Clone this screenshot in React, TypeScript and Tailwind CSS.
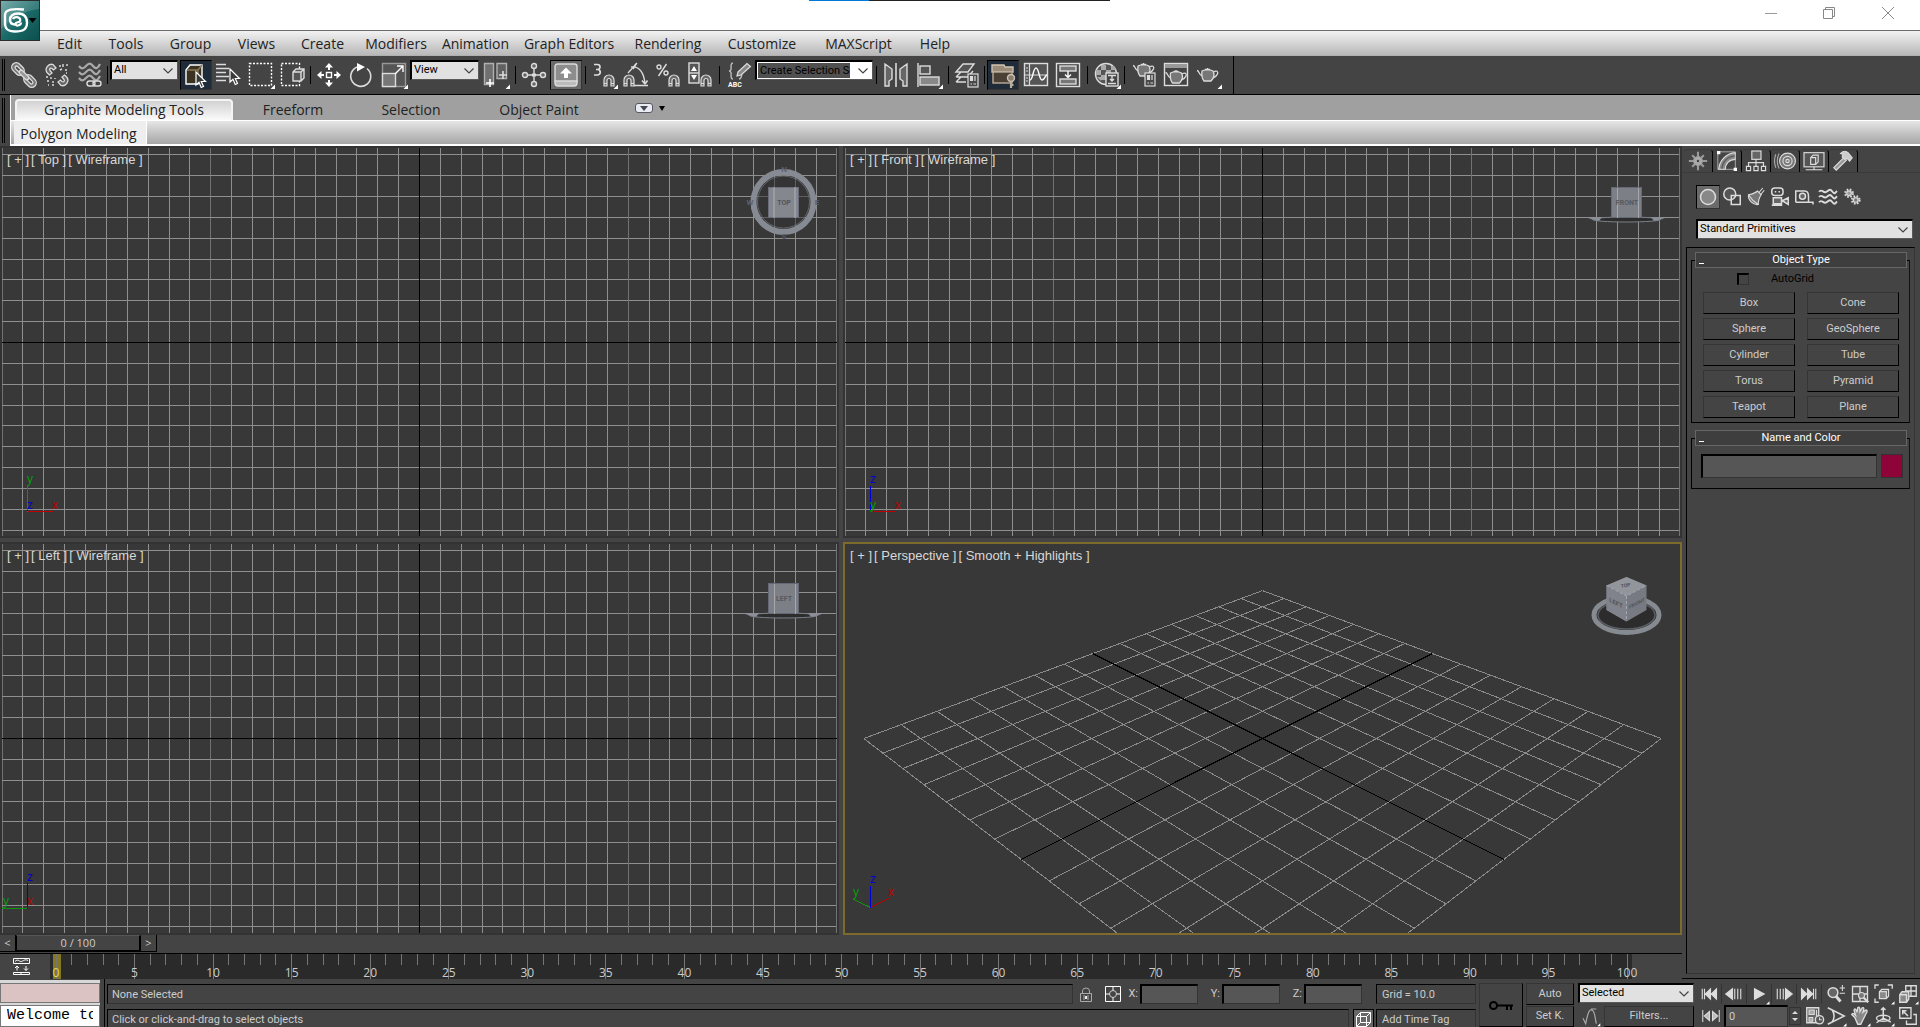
import React from 'react';
import clsx from 'clsx';

const LIGHT = '#dcdcdc';

interface IconProps {
  children: React.ReactNode;
  flyout?: boolean;
  className?: string;
}

// 24px drawing used by every toolbar button
const Icon: React.FC<IconProps> = ({ children, flyout, className = 'w-6 h-6' }) => (
  <svg viewBox="0 0 24 24" fill="none" stroke={LIGHT} strokeWidth="1.4" className={clsx('overflow-visible shrink-0', className)} aria-hidden="true">
    {children}
    {flyout && <path d="M21.5 26L26 21.5V26z" fill="#fff" stroke="none" />}
  </svg>
);

const Magnet = ({ x, y }: { x: number; y: number }) => (
  <path
    transform={`translate(${x} ${y})`}
    d="M0 11V5a5 5 0 0 1 10 0v6H7V5.500a2 2 0 0 0-4 0V11z M0 8.500h3 M7 8.500h3"
    fill="#6a6a6a"
    strokeWidth="1.2"
  />
);

const Teapot = ({ x = 0, y = 0 }: { x?: number; y?: number }) => (
  <g transform={`translate(${x} ${y})`} strokeWidth="1.3">
    <path d="M5 5c3-1.500 8-1.500 11 0 1.500 3 1 7-2 10H7C4.500 12 4.500 9 5 5z" fill="#777" />
    <path d="M5 10C2 9 2.500 5 0 4.500M16.500 6c3-2 5-.5 4 2-.7 2-2.500 3-4.500 4M8 3.500h5M10.500 3.500V2" />
  </g>
);

const Cursor = ({ x, y }: { x: number; y: number }) => (
  <path transform={`translate(${x} ${y})`} d="M0 0v13l3-2.800 2.200 5.300 2.300-1-2.200-5H9.500z" fill="#3a3a3a" stroke="#fff" strokeWidth="1.2" />
);

const Card = ({ x, y }: { x: number; y: number }) => (
  <g transform={`translate(${x} ${y})`} strokeWidth="1.2">
    <rect width="10" height="13" fill="#4a4a4a" />
    <path d="M2.500 2.500h2v4h-2z" fill={LIGHT} />
    <path d="M7 2v5M2.500 10h1.500M5.500 10H8" />
  </g>
);

const icons = {
  link: (
    <Icon>
      <g transform="rotate(45 12 12)" strokeWidth="1.3">
        <rect x="-3.500" y="7.500" width="14" height="9" rx="4.500" fill="#777" />
        <rect x="0" y="10.500" width="7" height="3" rx="1.500" fill="#444" />
        <rect x="13.500" y="7.500" width="14" height="9" rx="4.500" fill="#777" />
        <rect x="17" y="10.500" width="7" height="3" rx="1.500" fill="#444" />
        <rect x="6" y="10" width="12" height="4" rx="2" fill="#999" />
      </g>
    </Icon>
  ),
  unlink: (
    <Icon>
      <path d="M4.500 12L2 9.500C-.5 6 3 0 8 1.500L11 5 8.500 7 7 5.500C5 4.500 4 6 5 7.500L7 10zM19.500 12l2.500 2.500c2.500 3.500-1 9.500-6 8L13 19l2.500-2 1.500 1.500c2 1 3-.5 2-2L17 14z" fill="#666" strokeWidth="1.3" />
      <path d="M14 3h2M18 1v3M22 1v2M15 7l2-1M20 7h2M1 14h2M6 14v2M2 18h2M8 18v2M3 22h1M7 22h2M10 15v1M21 10h1" />
    </Icon>
  ),
  bind: (
    <Icon>
      {[3, 9, 15].map((y) => (
        <path key={y} d={`M1 ${y}c3 4 5 2 7 0s4-4 7 0 5 2 7-2`} stroke="#aaa" strokeWidth="2.200" />
      ))}
      <rect x="9" y="18" width="8" height="5" rx="2.500" />
      <rect x="15" y="18" width="8" height="5" rx="2.500" />
    </Icon>
  ),
  selectObject: (
    <Icon>
      <path d="M2 7l4-5h12v14l-4 5H2z" fill="#3b3222" stroke="#fff" />
      <path d="M3 7h11v13M14 7l4-5" stroke="#8a7a5a" />
      <Cursor x={12} y={9} />
    </Icon>
  ),
  selectByName: (
    <Icon>
      <path d="M0 1.500h10M0 5.500h13M0 9.500h10M0 13.500h13M0 17.500h10" strokeWidth="1.600" />
      <Cursor x={14} y={6} />
    </Icon>
  ),
  region: (
    <Icon flyout>
      <rect x=".5" y=".5" width="22" height="22" strokeDasharray="2 1.500" stroke="#fff" />
    </Icon>
  ),
  crossing: (
    <Icon>
      <rect x=".5" y=".5" width="18" height="22" strokeDasharray="2 1.500" stroke="#fff" />
      <path d="M12 9l3-3h8v9l-3 3h-8zM12 9h8v9M20 9l3-3" fill="#555" />
    </Icon>
  ),
  move: (
    <Icon>
      <rect x="9.500" y="9.500" width="5" height="5" stroke="#fff" />
      <path d="M12 0l4 4.500H8zM12 24l4-4.500H8zM0 12l4.500-4v8zM24 12l-4.500-4v8z" fill="#fff" stroke="none" />
      <path d="M12 4v3M12 17v3M4 12h3M17 12h3" stroke="#fff" strokeWidth="2" />
    </Icon>
  ),
  rotate: (
    <Icon>
      <path d="M18 5.500a10 10 0 1 1-9-1.800" strokeWidth="1.600" />
      <path d="M8 0l8 4-8 4.500z" fill="#fff" stroke="none" />
    </Icon>
  ),
  scale: (
    <Icon flyout>
      <rect x=".5" y=".5" width="23" height="23" fill="#555" stroke="#999" />
      <rect x=".5" y="10.500" width="13" height="13" fill="#777" />
      <path d="M13 11l8-8M15 3h6v6" stroke="#fff" />
    </Icon>
  ),
  pivot: (
    <Icon flyout>
      <path d="M.5.500h9v21h-9z" fill="#707070" stroke="#b0b0b0" />
      <path d="M13 .500h9.500v15H13z" fill="#606060" stroke="#b0b0b0" />
      <path d="M6 16v8M2 20h8" stroke="#fff" strokeWidth="1.600" />
      <path d="M19 8v8M15 12h8" stroke={LIGHT} strokeWidth="1.600" />
    </Icon>
  ),
  manipulate: (
    <Icon>
      <path d="M12 5v14M5 12h14" />
      {[[12, 3], [12, 21], [3, 12], [21, 12]].map(([cx, cy]) => (
        <circle key={`${cx}-${cy}`} cx={cx} cy={cy} r="2.500" fill="#666" />
      ))}
      <path d="M10 12h4" strokeWidth="3" />
    </Icon>
  ),
  override: (
    <Icon>
      <rect x="1" y="1" width="22" height="19" rx="2.500" fill="#8d8d8d" />
      <path d="M1 18v2q0 3 3 3h16q3 0 3-3v-2z" fill="#bbb" />
      <path d="M12 4.500l6 6h-4V15h-4v-4.500H6z" fill="#fff" stroke="none" />
    </Icon>
  ),
  snap3: (
    <Icon flyout>
      <path d="M2 1.500h3.500a2.500 2.500 0 0 1 0 5H4h1.500a2.700 2.700 0 0 1 0 5.500H2" stroke="#ddd" strokeWidth="1.700" />
      <Magnet x={12} y={12} />
    </Icon>
  ),
  angle: (
    <Icon>
      <Magnet x={0} y={12} />
      <path d="M4 10L13 0" strokeWidth="1.300" />
      <path d="M7 4c8-1 13 5 14 17" />
      <path d="M10 22.500h14M21 21l-3-3.500M21 21l2.500-3.500M9 6l3-5" strokeWidth="1.600" />
    </Icon>
  ),
  percent: (
    <Icon>
      <circle cx="3" cy="4" r="2" />
      <circle cx="10" cy="10" r="2" />
      <path d="M10.500 1L2.500 13" />
      <Magnet x={13} y={12} />
    </Icon>
  ),
  spinner: (
    <Icon>
      <rect x="1" y="0" width="10" height="20" fill="#555" />
      <path d="M1 10h10" />
      <path d="M3 8l3-5 3 5zM3 12l3 5 3-5z" fill="#fff" stroke="none" />
      <Magnet x={13} y={12} />
    </Icon>
  ),
  namedSets: (
    <Icon>
      <path d="M6 0C3 0 4.500 5 4 6.500 3.500 8 2 8 2 8s1.500 0 2 1.500S3 16 6 16M15 8c0 5-1 8-3 8" stroke="#bbb" />
      <path d="M11 9l9-8.500 3.500 3L14 12l-4 1z" fill="#888" strokeWidth="1.200" />
      <text x="1" y="24" fill="#fff" stroke="none" fontSize="7" fontWeight="bold" fontFamily="Roboto, sans-serif">ABC</text>
    </Icon>
  ),
  mirror: (
    <Icon>
      <path d="M1 1l7 5v10l-3 2v5H1zM23 1l-7 5v10l3 2v5h4z" fill="#666" />
      <path d="M12 0v24" stroke="#eee" />
    </Icon>
  ),
  align: (
    <Icon flyout>
      <path d="M1 0v24" />
      <rect x="3" y="3" width="10" height="8" fill="#555" />
      <rect x="3" y="14" width="19" height="8" fill="#888" />
    </Icon>
  ),
  layers: (
    <Icon>
      <path d="M1 9L8 1h11l-6 8zM1 14h12l5-6M1 14l5-5M1 19h10M1 19l5-5" fill="#555" />
      <Card x={13} y={11} />
    </Icon>
  ),
  ribbon: (
    <Icon>
      <path d="M1 2h12l1 2h8v5H1z" fill="#9a8c78" stroke="#cfc3b0" />
      <rect x="2" y="9" width="19" height="11" fill="#4b4034" stroke="#b8ac9a" />
      <circle cx="20" cy="15" r="3.500" fill="#8a8072" stroke="#cfc3b0" />
      <path d="M20 18.500V25M20 22h2.500" stroke="#b8ac9a" strokeWidth="2.200" />
    </Icon>
  ),
  curve: (
    <Icon>
      <rect x=".5" y=".5" width="23" height="22" fill="#555" />
      <path d="M5.500 1v21M1 12h22M2 5h2M2 8h2M2 15h2M2 18h2" strokeWidth="1.200" />
      <path d="M6 17c3 0 3-12 6-12s3 12 6 12 3-5 5-5" stroke="#fff" />
    </Icon>
  ),
  schematic: (
    <Icon>
      <rect x=".5" y=".5" width="23" height="23" fill="#444" />
      <rect x="4" y="3" width="16" height="5" fill="#777" />
      <rect x="4" y="16" width="16" height="5" fill="#777" />
      <path d="M12 8v6M9 11.500l3 3 3-3" stroke="#fff" />
    </Icon>
  ),
  material: (
    <Icon flyout>
      <circle cx="11" cy="11" r="10.500" fill="#555" />
      <path d="M6 2h5v5H6zM11 7h5v5h-5zM1 7h5v5H1zM6 12h5v5H6zM16 3h3l2 4h-5zM11 17h3v4h-3zM2 14h4v4z" fill="#aaa" stroke="none" />
      <rect x="11" y="10" width="12" height="13" fill="#444" />
      <path d="M13 12.500h8M17 13v5M15 16l2 2 2-2M13 20.500h8" />
    </Icon>
  ),
  renderSetup: (
    <Icon>
      <Teapot x={1} y={-2} />
      <Card x={13} y={10} />
    </Icon>
  ),
  renderedFrame: (
    <Icon>
      <rect x=".5" y=".5" width="23" height="22" fill="#444" />
      <rect x="1" y="1" width="22" height="4" fill="#999" stroke="none" />
      <Teapot x={1.500} y={5} />
    </Icon>
  ),
  render: (
    <Icon flyout>
      <Teapot x={1} y={3} />
    </Icon>
  ),
};

const ToolButton: React.FC<{ label: string; children: React.ReactNode; wide?: boolean; active?: 'blue' | 'gray' }> = ({ label, children, wide, active }) => (
  <button
    aria-label={label}
    className={clsx(
      'shrink-0 flex items-center justify-center',
      wide ? 'w-[33px]' : 'w-8',
      active ? 'h-[30px] border border-black border-r-[#333] border-b-[#333]' : 'h-full',
      active === 'blue' && 'bg-[#1f2b38]',
      active === 'gray' && 'bg-[#6a6a6a]',
    )}
  >
    {children}
  </button>
);

const Separator = ({ tight }: { tight?: boolean }) => (
  <div className={clsx('shrink-0 w-px h-[18px] bg-black', tight ? 'ml-px mr-[2px]' : 'ml-[3px] mr-[2px]')} />
);

const Chevron = () => (
  <svg viewBox="0 0 10 6" className="absolute right-1 top-1/2 -mt-[3px] w-[10px] h-[6px] pointer-events-none" fill="none" stroke="#444" strokeWidth="1.2" aria-hidden="true">
    <path d="M.5.500L5 5 9.500.500" />
  </svg>
);

const Dropdown: React.FC<{ label: string; value: string; className: string }> = ({ label, value, className }) => (
  <div className={clsx('relative shrink-0 border-t-2 border-l-2 border-black border-r border-b border-r-[#5a5a5a] border-b-[#5a5a5a]', className)}>
    <select aria-label={label} className="block appearance-none w-full h-full bg-[#e1e1e1] text-black pl-[2px] pr-4 outline-none">
      <option>{value}</option>
    </select>
    <Chevron />
  </div>
);

const menus = [
  { name: 'Edit', width: 'w-[53px]' },
  { name: 'Tools', width: 'w-[60px]' },
  { name: 'Group', width: 'w-[69px]' },
  { name: 'Views', width: 'w-[63px]' },
  { name: 'Create', width: 'w-[69px]' },
  { name: 'Modifiers', width: 'w-[78px]' },
  { name: 'Animation', width: 'w-[81px]' },
  { name: 'Graph Editors', width: 'w-[106px]' },
  { name: 'Rendering', width: 'w-[92px]' },
  { name: 'Customize', width: 'w-[96px]' },
  { name: 'MAXScript', width: 'w-[97px]' },
  { name: 'Help', width: 'w-[56px]' },
];

const TitleBar = () => (
  <header className="relative shrink-0">
    <div className="h-[31px] bg-white border-b border-[#6b6b6b] flex justify-end">
      <div className="absolute top-0 left-[809px] flex h-px">
        <div className="w-[60px] bg-[#0078d7]" />
        <div className="w-[241px] bg-[#222]" />
      </div>
      <button aria-label="Minimize" className="w-[58px] h-[26px] flex items-center justify-center">
        <svg viewBox="0 0 12 12" className="w-3 h-3" stroke="#999" aria-hidden="true"><path d="M0 6.500h12" /></svg>
      </button>
      <button aria-label="Restore" className="w-[58px] h-[26px] flex items-center justify-center">
        <svg viewBox="0 0 12 12" className="w-3 h-3" fill="none" stroke="#888" aria-hidden="true"><path d="M.5 2.500h9v9h-9zM2.500 2.500v-2h9v9h-2" /></svg>
      </button>
      <button aria-label="Close" className="w-[59px] mr-[3px] h-[26px] flex items-center justify-center">
        <svg viewBox="0 0 12 12" className="w-3 h-3" stroke="#888" aria-hidden="true"><path d="M0 0l12 12M12 0L0 12" /></svg>
      </button>
    </div>
    <nav className="h-[25px] pl-[43px] pt-[2px] flex bg-gradient-to-b from-[#f2f2f2] to-[#b8b8b8] border-b border-[#b0b0b0] text-sm text-[#222]">
      {menus.map((m) => (
        <button key={m.name} className={clsx('h-full whitespace-nowrap', m.width)}>{m.name}</button>
      ))}
    </nav>
    <button aria-label="Application menu" className="absolute left-0 top-0 w-10 h-[41px] border border-[#2b2b2b] bg-gradient-to-br from-[#5c9e9b] via-[#1a6b69] to-[#0c4f4e]">
      <svg viewBox="0 0 38 39" className="w-full h-full" fill="none" stroke="#fff" aria-hidden="true">
        <path d="M0 0h38v8C22 10 10 18 0 28z" fill="#fff" opacity=".15" stroke="none" />
        <path d="M23 8.500C13 7.500 4 8 4 14v8c0 7 4 8.500 10 8.500 8 0 12-2 12-9 0-6-3-9-9-9-5 0-8 2.500-8 6 0 3 2 5 5 5" strokeWidth="2.400" />
        <path d="M12 18c1-2.500 6-2.500 7 0s-1 3-3 3.500-2 3.500 1 3c2-.3 3-1.500 3-3" strokeWidth="2.200" />
        <path d="M27.500 17h8l-4 5z" fill="#000" stroke="none" />
      </svg>
    </button>
  </header>
);

const MainToolbar = () => (
  <div className="shrink-0 h-[39px] bg-[#444] border-b border-black text-[11px] font-['Roboto',sans-serif]">
    <div className="h-full w-[1234px] flex items-center border-r border-black">
      <div className="w-[3px] h-8 mx-[2px] border-x border-black" />
      <ToolButton label="Select and Link" wide>{icons.link}</ToolButton>
      <ToolButton label="Unlink Selection" wide>{icons.unlink}</ToolButton>
      <ToolButton label="Bind to Space Warp" wide>{icons.bind}</ToolButton>
      <Separator tight />
      <Dropdown label="Selection Filter" value="All" className="w-[68px] h-5 self-start mt-1 mr-[2px]" />
      <ToolButton label="Select Object" active="blue">{icons.selectObject}</ToolButton>
      <ToolButton label="Select by Name">{icons.selectByName}</ToolButton>
      <ToolButton label="Rectangular Selection Region" wide>{icons.region}</ToolButton>
      <ToolButton label="Window/Crossing">{icons.crossing}</ToolButton>
      <Separator tight />
      <ToolButton label="Select and Move">{icons.move}</ToolButton>
      <ToolButton label="Select and Rotate">{icons.rotate}</ToolButton>
      <ToolButton label="Select and Scale" wide>{icons.scale}</ToolButton>
      <Dropdown label="Reference Coordinate System" value="View" className="w-[69px] h-5 self-start mt-1" />
      <ToolButton label="Use Pivot Point Center" wide>{icons.pivot}</ToolButton>
      <Separator />
      <ToolButton label="Select and Manipulate">{icons.manipulate}</ToolButton>
      <ToolButton label="Keyboard Shortcut Override" active="gray">{icons.override}</ToolButton>
      <Separator />
      <ToolButton label="Snaps Toggle">{icons.snap3}</ToolButton>
      <ToolButton label="Angle Snap">{icons.angle}</ToolButton>
      <ToolButton label="Percent Snap">{icons.percent}</ToolButton>
      <ToolButton label="Spinner Snap">{icons.spinner}</ToolButton>
      <Separator />
      <ToolButton label="Edit Named Selection Sets" wide>{icons.namedSets}</ToolButton>
      <div className="relative shrink-0 w-[118px] h-5 self-start mt-1 bg-white border-t-2 border-l-2 border-black border-r border-b border-r-[#5a5a5a] border-b-[#5a5a5a] p-px">
        <input aria-label="Named Selection Sets" defaultValue="Create Selection Set" className="block w-[92px] h-full bg-[#505050] text-black pl-[2px] outline-none" />
        <Chevron />
      </div>
      <Separator />
      <ToolButton label="Mirror" wide>{icons.mirror}</ToolButton>
      <ToolButton label="Align" wide>{icons.align}</ToolButton>
      <Separator />
      <ToolButton label="Layer Manager">{icons.layers}</ToolButton>
      <Separator tight />
      <ToolButton label="Graphite Modeling Tools" active="blue">{icons.ribbon}</ToolButton>
      <ToolButton label="Curve Editor" wide>{icons.curve}</ToolButton>
      <ToolButton label="Schematic View">{icons.schematic}</ToolButton>
      <Separator />
      <ToolButton label="Material Editor" wide>{icons.material}</ToolButton>
      <Separator tight />
      <ToolButton label="Render Setup" wide>{icons.renderSetup}</ToolButton>
      <ToolButton label="Rendered Frame Window">{icons.renderedFrame}</ToolButton>
      <ToolButton label="Render Production">{icons.render}</ToolButton>
    </div>
  </div>
);

const Ribbon = () => (
  <div className="shrink-0 h-[51px] flex bg-[#444] text-sm text-[#222]">
    <div className="w-[3px] ml-[2px] mr-[5px] my-[3px] border-x border-black" />
    <div className="flex-1 flex flex-col border-l border-white">
      <div className="h-[25px] bg-[#a0a0a0] flex items-end pl-1">
        <button className="w-[218px] h-[21px] rounded-t-sm border-2 border-b-0 border-[#f4f4f4] bg-gradient-to-b from-[#d2d2d2] to-[#fafafa] leading-4 pb-[2px]">Graphite Modeling Tools</button>
        <button className="w-[120px] h-5">Freeform</button>
        <button className="w-[116px] h-5">Selection</button>
        <button className="w-[140px] h-5">Object Paint</button>
        <button aria-label="Minimize ribbon" className="ml-[26px] mb-[7px] w-[18px] h-[10px] rounded-[3px] border border-[#556] bg-[#e8ecf2] flex items-center justify-center">
          <svg viewBox="0 0 8 5" className="w-2 h-[5px]" aria-hidden="true"><path d="M0 0h8L4 5z" fill="#445" /></svg>
        </button>
        <button aria-label="Ribbon options" className="ml-[6px] mb-[9px]">
          <svg viewBox="0 0 6 5" className="w-[6px] h-[5px]" aria-hidden="true"><path d="M0 0h6L3 5z" fill="#000" /></svg>
        </button>
      </div>
      <div className="flex-1 border-t border-b-2 border-white bg-gradient-to-b from-[#e6e6e6] to-[#a6a6a6] flex pl-[3px]">
        <button className="w-[133px] pt-[2px] pr-[3px] bg-[#eee] border-r border-white whitespace-nowrap">Polygon Modeling</button>
      </div>
    </div>
  </div>
);

const STEP = 20.87;
const range = (from: number, to: number) => Array.from({ length: to - from + 1 }, (_, i) => from + i);

const WireGrid = () => (
  <svg className="block w-full h-full" shapeRendering="crispEdges" aria-hidden="true">
    <svg x="50%" y="50%" className="overflow-visible">
      {range(-60, 60).filter((n) => n !== 0).map((n) => (
        <g key={n} stroke={n % 10 === 0 ? '#727272' : '#8f8f8f'}>
          <path d={`M${Math.round(n * STEP)} -1200V1200`} />
          <path d={`M-1200 ${Math.round(n * STEP)}H1200`} />
        </g>
      ))}
      <path d="M0 -1200V1200M-1200 0H1200" stroke="#000" />
    </svg>
  </svg>
);

// ground plane of 14 x 14 cells seen from a corner
const project = (i: number, j: number) => {
  const a = i - j;
  const b = i + j;
  const w = 1 - 0.0249 * b;
  return `${((28.48 * a) / w).toFixed(1)} ${((14.25 * b) / w).toFixed(1)}`;
};

const PerspectiveGrid = () => (
  <svg className="block w-full h-full" shapeRendering="crispEdges" aria-hidden="true">
    <svg x="50%" y="50%" className="overflow-visible">
      {range(-7, 7).map((n) => (
        <path key={n} d={`M${project(n, -7)}L${project(n, 7)}M${project(-7, n)}L${project(7, n)}`} stroke="#8a8a8a" />
      ))}
      <path d={`M${project(0, -7)}L${project(0, 7)}M${project(-7, 0)}L${project(7, 0)}`} stroke="#000" />
    </svg>
  </svg>
);

const cubeFont = { fontFamily: 'Roboto, sans-serif', fontWeight: 700, textAnchor: 'middle' as const };

const TopCube = () => (
  <>
    <circle cx="40.500" cy="40" r="30" fill="none" stroke="#868a92" strokeWidth="6" />
    <circle cx="40.500" cy="40" r="26" fill="#2f2f2f" fillOpacity=".5" stroke="#606468" />
    <rect x="25.500" y="25.500" width="30" height="30" fill="#85878f" stroke="#6b6c7c" />
    <path d="M31 25v31M52 25v31" stroke="#b0b2b8" />
    <g {...cubeFont} fontSize="8" fill="#50535a">
      <text x="41" y="43" fontSize="7">TOP</text>
      <text x="41" y="10" fill="#5c6070">N</text>
      <text x="41" y="77" fill="#5c6070">S</text>
      <text x="7" y="43" fill="#5c6070">W</text>
      <text x="74" y="43" fill="#5c6070">E</text>
    </g>
  </>
);

const SideCube = ({ face }: { face: string }) => (
  <>
    <ellipse cx="40.500" cy="57.500" rx="34" ry="2.500" fill="#2d2d2d" stroke="#7c8189" />
    <path d="M2 56.500l14-1.500-3 4zM79 56.500L65 55l3 4z" fill="#8a8f98" />
    <rect x="25.500" y="25.500" width="30" height="30" fill="#7d7f86" stroke="#666a76" />
    <path d="M31.500 26v30M52.500 26v30" stroke="#a5a7ad" />
    <text x="41" y="43" {...cubeFont} fontSize="7" fill="#555961">{face}</text>
  </>
);

const PerspectiveCube = () => (
  <>
    <ellipse cx="40.500" cy="57" rx="32.500" ry="17.500" fill="#2c2c2c" stroke="#868a91" strokeWidth="5" />
    <ellipse cx="40.500" cy="57" rx="28.500" ry="14" fill="none" stroke="#5b5f64" strokeWidth="1.500" />
    <path d="M40.500 19l20 8.500V52L40.500 63.500 20.500 52V27.500z" fill="#777a82" />
    <path d="M40.500 19l20 8.500-20 10.500-20-10.500z" fill="#92959c" />
    <path d="M20.500 27.500l20 10.500v25.500l-20-11.500z" fill="#80838b" />
    <path d="M20.500 27.500l20 10.500 20-10.500M40.500 38v25" fill="none" stroke="#a4a8b2" strokeDasharray="3 2" />
    <g {...cubeFont} fontSize="6" fill="#50535a">
      <text transform="translate(30 47) skewY(27)">LEFT</text>
      <text transform="translate(51 47) skewY(-27)" fontSize="5">FRONT</text>
      <text transform="translate(40 29) rotate(-12)" fontSize="5">TOP</text>
    </g>
  </>
);

interface AxisLine {
  name: string;
  color: string;
  path: string;
  x: number;
  y: number;
}

interface ViewportProps {
  name: string;
  shading: string;
  axes: AxisLine[];
  cube: React.ReactNode;
  active?: boolean;
}

const RED = '#c00000';
const GREEN = '#0a980a';
const BLUE = '#0000d0';

const Viewport: React.FC<ViewportProps> = ({ name, shading, axes, cube, active }) => (
  <section className={clsx('relative min-w-0 min-h-0 overflow-hidden bg-[#383838] border-2', active ? 'border-[#7e6a2c]' : 'border-[#333]')}>
    {active ? <PerspectiveGrid /> : <WireGrid />}
    <h2 className="absolute left-[5px] top-1 flex gap-[2px] text-[13px] leading-4 text-[#d8d8d8] font-['Liberation_Sans',sans-serif] whitespace-pre">
      <span>[ + ]</span>
      <span>{`[ ${name} ]`}</span>
      <span>{`[ ${shading} ]`}</span>
    </h2>
    <svg viewBox="0 0 80 80" className="absolute right-[14px] top-[14px] w-20 h-20" aria-hidden="true">{cube}</svg>
    <svg viewBox="0 -12 60 72" className="absolute left-0 bottom-0 w-[60px] h-[72px]" fill="none" aria-hidden="true">
      {axes.map((a) => (
        <g key={a.name}>
          <path d={a.path} stroke={a.color} shapeRendering="crispEdges" />
          <text x={a.x} y={a.y} fill={a.color} fontSize="12" fontFamily="Liberation Sans, sans-serif">{a.name}</text>
        </g>
      ))}
    </svg>
  </section>
);

const Viewports = () => (
  <div className="flex-1 min-h-0 grid grid-cols-2 grid-rows-[392fr_393fr] gap-1">
    <Viewport
      name="Top"
      shading="Wireframe"
      cube={<TopCube />}
      axes={[
        { name: 'x', color: RED, path: 'M25.500 35.500H51', x: 50, y: 33 },
        { name: 'y', color: GREEN, path: 'M25.500 36V10', x: 25, y: 7 },
        { name: 'z', color: BLUE, path: 'M25.500 35V34', x: 25, y: 33 },
      ]}
    />
    <Viewport
      name="Front"
      shading="Wireframe"
      cube={<SideCube face="FRONT" />}
      axes={[
        { name: 'x', color: RED, path: 'M25.500 35.500H51', x: 50, y: 33 },
        { name: 'z', color: BLUE, path: 'M25.500 36V10', x: 25, y: 7 },
        { name: 'y', color: GREEN, path: 'M25.500 35V34', x: 25, y: 33 },
      ]}
    />
    <Viewport
      name="Left"
      shading="Wireframe"
      cube={<SideCube face="LEFT" />}
      axes={[
        { name: 'y', color: GREEN, path: 'M0 35.500H25', x: 1, y: 32 },
        { name: 'z', color: BLUE, path: 'M25.500 36V10', x: 25, y: 8 },
        { name: 'x', color: RED, path: 'M25.500 35V34', x: 25, y: 32 },
      ]}
    />
    <Viewport
      name="Perspective"
      shading="Smooth + Highlights"
      cube={<PerspectiveCube />}
      active
      axes={[
        { name: 'x', color: RED, path: 'M25.500 34.500L45 25', x: 43, y: 23 },
        { name: 'y', color: GREEN, path: 'M25.500 34.500L8 26', x: 8, y: 23 },
        { name: 'z', color: BLUE, path: 'M25.500 35V13', x: 25, y: 10 },
      ]}
    />
  </div>
);

const TimeSlider = () => (
  <div className="shrink-0 h-[19px] border-b border-black bg-[#444] flex items-start text-[11px] leading-4 text-[#ccc]">
    <button className="w-4 h-[17px] border-r border-b border-black">&lt;</button>
    <button className="w-[125px] h-[17px] border-r-2 border-b-2 border-l border-t border-black border-t-[#555] leading-[14px]">0 / 100</button>
    <button className="w-4 h-[17px] border-r border-b border-black">&gt;</button>
  </div>
);

const TrackBar = () => (
  <div className="shrink-0 h-[25px] flex bg-[#444]">
    <button aria-label="Open Mini Curve Editor" className="w-[50px] flex items-center pl-[13px]">
      <svg viewBox="0 0 17 17" className="w-[17px] h-[17px]" fill="none" stroke="#fff" aria-hidden="true">
        <path d="M.5.500h16v5H.5zM2 3.500c3-3 4 0 6 0s4-3 7-1M.5 14.500h16v2H.5zM4 12.500V8M2 10l2-2 2 2M13 8v4.500M11 10.500l2 2 2-2M8 15v1" />
      </svg>
    </button>
    <div className="relative flex-1 mr-[50px] pl-[6px] pr-[5px] bg-[#2a2a2a]">
      <svg className="block w-full h-full overflow-visible" aria-hidden="true">
        <rect x="-3" y="0" width="8" height="25" fill="#857820" />
        {range(0, 100).map((n) => (
          <line key={n} x1={`${n}%`} x2={`${n}%`} y1="0" y2={n % 5 ? 11 : 25} stroke="#767676" shapeRendering="crispEdges" />
        ))}
        {range(0, 20).map((n) => (
          <text key={n} x={`${n * 5}%`} y="23" textAnchor="middle" fontSize="12" fill={n ? '#ccc' : '#e6dc50'}>{n * 5}</text>
        ))}
      </svg>
    </div>
  </div>
);

const panelTabs = [
  {
    name: 'Create',
    icon: (
      <Icon className="w-5 h-5">
        <g stroke="#9a9a9a" strokeWidth="2.500">
          <path d="M12 1v22M1 12h22M5 5l14 14M19 5L5 19" />
          <circle cx="12" cy="12" r="5.500" fill="#aaa" strokeWidth="1" />
          <circle cx="12" cy="12" r="1.500" fill="#444" stroke="none" />
        </g>
      </Icon>
    ),
  },
  {
    name: 'Modify',
    icon: (
      <Icon className="w-5 h-5">
        <path d="M2 22C3 11 11 3 22 2v8c-7 0-12 5-12 12z" fill="#888" />
        <path d="M6 22c0-9 7-16 16-16" stroke="#555" />
        <path d="M1 1h21v21H1z" stroke="#bbb" strokeWidth="1" />
        <path d="M0 0h4v4H0zM20 20h4v4h-4z" fill="#fff" stroke="none" />
      </Icon>
    ),
  },
  {
    name: 'Hierarchy',
    icon: (
      <Icon className="w-5 h-5">
        <rect x="7" y="0" width="11" height="10" fill="#666" />
        <path d="M12 10v8M3 18v-4h18v4" />
        <path d="M.500 18.500h5v5h-5zM9.500 18.500h5v5h-5zM18.500 18.500h5v5h-5z" />
      </Icon>
    ),
  },
  {
    name: 'Motion',
    icon: (
      <Icon className="w-5 h-5">
        <circle cx="15" cy="12" r="9.500" fill="#777" />
        <circle cx="15" cy="12" r="5.500" />
        <circle cx="15" cy="12" r="2" />
        <path d="M5 3C2 8 2 16 5 21M1 4c-2 5-2 11 0 16" stroke="#aaa" />
      </Icon>
    ),
  },
  {
    name: 'Display',
    icon: (
      <Icon className="w-5 h-5">
        <rect x="0" y="2" width="24" height="17" fill="#555" />
        <path d="M8 8l3-3h6v8l-3 3H8zM8 8h6v8" />
        <path d="M12 19v3M2 22.500h20" />
      </Icon>
    ),
  },
  {
    name: 'Utilities',
    icon: (
      <Icon className="w-5 h-5">
        <path d="M1 20L13 8l3 3L4 23z" fill="#999" />
        <path d="M9 3c3-4 7-3 9-1l5 6-3 4-3-3-3 1-3-3 1-3z" fill="#ccc" />
      </Icon>
    ),
  },
];

const categories = [
  { name: 'Geometry', icon: <Icon className="w-[18px] h-[18px]"><circle cx="12" cy="12" r="10" fill="#888" strokeWidth="2" /></Icon> },
  {
    name: 'Shapes',
    icon: (
      <Icon className="w-[18px] h-[18px]">
        <circle cx="9" cy="8" r="8" fill="#555" strokeWidth="2" />
        <path d="M11 10h12v12H11z" strokeWidth="2" />
      </Icon>
    ),
  },
  {
    name: 'Lights',
    icon: (
      <Icon className="w-[18px] h-[18px]">
        <path d="M2 9c5-1 9-2 12-5l5 5c-3 4-4 8-4 13C8 23 1 16 2 9z" fill="#777" strokeWidth="1.500" />
        <path d="M16 6l5-6M18 9l5-6M2 9c3 5 8 10 13 13" strokeWidth="1.500" />
      </Icon>
    ),
  },
  {
    name: 'Cameras',
    icon: (
      <Icon className="w-[18px] h-[18px]">
        <rect x="1" y="0" width="15" height="10" rx="4" strokeWidth="2" />
        <path d="M5 5h2M10 5h2M3 13h11v8H3zM1 23h14M15 17l8-4v9z" strokeWidth="2" fill="#666" />
      </Icon>
    ),
  },
  {
    name: 'Helpers',
    icon: (
      <Icon className="w-[18px] h-[18px]">
        <path d="M1 19V4h12c3 0 5 3 5 7v8M1 19h23v3" strokeWidth="2" />
        <circle cx="10" cy="11" r="4" fill="#666" strokeWidth="2" />
      </Icon>
    ),
  },
  {
    name: 'Space Warps',
    icon: (
      <Icon className="w-[18px] h-[18px]">
        {[5, 12, 19].map((y) => (
          <path key={y} d={`M0 ${y}c4-5 6 3 10 0s5-4 8 0 4 1 6-1`} strokeWidth="2.500" />
        ))}
      </Icon>
    ),
  },
  {
    name: 'Systems',
    icon: (
      <Icon className="w-[18px] h-[18px]">
        <circle cx="8" cy="7" r="5" fill="#777" strokeWidth="3" strokeDasharray="2 2" />
        <circle cx="8" cy="7" r="3" fill="#999" />
        <circle cx="17" cy="16" r="5" fill="#777" strokeWidth="3" strokeDasharray="2 2" />
        <circle cx="17" cy="16" r="3" />
      </Icon>
    ),
  },
];

const primitives = ['Box', 'Cone', 'Sphere', 'GeoSphere', 'Cylinder', 'Tube', 'Torus', 'Pyramid', 'Teapot', 'Plane'];

const raised = 'border border-t-[#353535] border-l-[#353535] border-r-black border-b-black';

const Rollout: React.FC<{ title: string; children: React.ReactNode }> = ({ title, children }) => (
  <section className="relative pt-2">
    <div className="border border-black border-r-[#111] pt-2">{children}</div>
    <button className="absolute top-0 left-1 right-[3px] h-4 border border-[#666] bg-[#3e3e3e] text-white leading-[14px]">
      <span className="absolute left-[3px] bottom-[3px] w-[5px] h-px bg-white" />
      {title}
    </button>
  </section>
);

const CommandPanel = () => (
  <aside className="shrink-0 w-[238px] bg-[#444] text-[11px] text-[#ccc] font-['Roboto',sans-serif] flex flex-col border-b border-black">
    <div className="flex mt-[3px] pl-[2px] h-6 border-b border-[#3a3a3a]">
      {panelTabs.map((t) => (
        <button key={t.name} aria-label={t.name} className="w-[29px] flex items-center justify-center border-t border-r border-t-[#3a3a3a] border-r-black rounded-t">
          {t.icon}
        </button>
      ))}
    </div>
    <div className="flex mt-3 pl-[14px] h-6">
      {categories.map((c, i) => (
        <button key={c.name} aria-label={c.name} className={clsx('w-6 h-6 flex items-center justify-center', i === 0 && 'bg-[#6a6a6a] border border-black border-r-[#333] border-b-[#333]')}>
          {c.icon}
        </button>
      ))}
    </div>
    <Dropdown label="Category" value="Standard Primitives" className="mt-[10px] ml-[14px] mr-[7px] h-5" />
    <div className="flex-1 mt-2 ml-1 mr-[5px] mb-1 border border-black border-r-[#353535] border-b-[#353535] px-1 pt-1 flex flex-col gap-[7px]">
      <Rollout title="Object Type">
        <label className="ml-[45px] h-5 flex items-center gap-[22px] text-black">
          <input type="checkbox" className="appearance-none w-3 h-3 border-2 border-black border-r-[#333] border-b-[#333] border-r border-b" />
          AutoGrid
        </label>
        <div className="grid grid-cols-2 gap-x-3 gap-y-1 pl-[11px] pr-[10px] pb-1 pt-[3px]">
          {primitives.map((p) => (
            <button key={p} className={clsx('h-[22px]', raised)}>{p}</button>
          ))}
        </div>
      </Rollout>
      <Rollout title="Name and Color">
        <div className="flex gap-1 pt-[7px] pb-[10px] pl-[9px] pr-[6px]">
          <input aria-label="Name" className="flex-1 min-w-0 h-6 bg-[#565656] border-t-2 border-l-2 border-black border-r border-b border-r-[#333] border-b-[#333] outline-none" />
          <button aria-label="Object color" className="w-[22px] h-6 bg-[#8e0439] border border-[#333]" />
        </div>
      </Rollout>
    </div>
  </aside>
);

const sunken = 'border border-black border-r-[#333] border-b-[#333]';

const playback: { name: string; path: string; flyout?: boolean }[] = [
  { name: 'Go to Start', path: 'M3 5v14M6 5v14M14 5v14L7 12zM22 5v14l-7-7z' },
  { name: 'Previous Frame', path: 'M10 5v14L1 12zM13 5v14M17 5v14M21 5v14' },
  { name: 'Play', path: 'M6 5v14l13-7z', flyout: true },
  { name: 'Next Frame', path: 'M14 5v14l9-7zM3 5v14M7 5v14M11 5v14' },
  { name: 'Go to End', path: 'M21 5v14M18 5v14M10 5v14l7-7zM2 5v14l7-7z' },
];

const navTop = [
  { name: 'Zoom', icon: <Icon className="w-[18px] h-[18px]"><circle cx="8" cy="10" r="6.500" fill="#666" strokeWidth="2" /><path d="M12 15l6 7" strokeWidth="4" /><path d="M17 4h7M20.500 0v8M17 11h7" /></Icon> },
  { name: 'Zoom All', icon: <Icon className="w-[18px] h-[18px]"><path d="M2 2h20v20H2zM12 2v20M2 12h20" strokeWidth="1.800" fill="#555" /><circle cx="14" cy="14" r="4" fill="#777" /><path d="M17 17l6 6" strokeWidth="3" /></Icon> },
  { name: 'Zoom Extents', icon: <Icon flyout className="w-[18px] h-[18px]"><path d="M0 5V0h5M17 0h6v5M0 18v5h5M6 9l3-3h9v9l-3 3H6zM6 9h9v9" strokeWidth="1.800" /><path d="M6 9h9v9H6z" fill="#888" /></Icon> },
  { name: 'Zoom Extents All', icon: <Icon flyout className="w-[18px] h-[18px]"><path d="M9 1h14v14H9zM16 1v14M9 8h14" strokeWidth="1.800" /><path d="M1 13l3-4h9v10l-3 4H1zM1 13h9v10" fill="#888" strokeWidth="1.800" /></Icon> },
];

const navBottom = [
  { name: 'Field of View', icon: <Icon flyout className="w-[18px] h-[18px]"><path d="M1 1l22 11L1 23M7 4c3 5 3 11 0 16" strokeWidth="2" /></Icon> },
  { name: 'Pan View', icon: <Icon flyout className="w-[18px] h-[18px]"><path d="M5 14L1 10c1-3 4 0 5 1L4 4c1-3 3-1 4 3l1-6c2-2 3 0 3 5l3-5c2-1 3 1 1 6l4-3c2 0 2 2 0 5l-4 8-3 6H9z" fill="#888" strokeWidth="1.800" /></Icon> },
  { name: 'Orbit', icon: <Icon flyout className="w-[18px] h-[18px]"><path d="M11 1v14l10 5M11 15L2 21M8 4l3-3 3 3" strokeWidth="2" /><ellipse cx="11" cy="15" rx="9" ry="4" strokeWidth="1.800" /></Icon> },
  { name: 'Maximize Viewport', icon: <Icon className="w-[18px] h-[18px]"><path d="M1 1h15v14H1zM19 10h4v13H10v-5" strokeWidth="1.800" /><path d="M5 5l7 7M5 10V5h5" strokeWidth="2" /></Icon> },
];

const Transform = ({ axis }: { axis: string }) => (
  <label className="flex items-center gap-[2px]">
    <span className="w-[10px] text-right">{axis}:</span>
    <input className="w-[58px] h-5 bg-[#565656] border-t-2 border-l-2 border-black border-r border-b border-r-[#333] border-b-[#333] outline-none" />
  </label>
);

const StatusBar = () => (
  <footer className="shrink-0 h-12 flex overflow-hidden bg-[#444] text-[11px] text-[#ccc] font-['Roboto',sans-serif]">
    <div className="w-[100px] pt-[3px] flex flex-col gap-[2px] bg-[#d8d8d8] border-t border-[#444]">
      <input aria-label="Macro recorder" className="w-full h-5 bg-[#dbc2c3] border border-[#777] outline-none" />
      <input
        aria-label="Script listener"
        defaultValue="Welcome to MAXScript."
        className="w-full h-[22px] bg-white border border-[#777] pl-[6px] pr-[6px] pt-px text-[15px] text-black font-['Liberation_Mono',monospace] outline-none"
      />
    </div>
    <div className="w-px ml-1 mr-[2px] bg-black" />
    <div className="flex-1 min-w-0 pt-[5px] flex flex-col gap-[5px]">
      <div className="flex items-center h-5">
        <div className={clsx('flex-1 h-5 px-1 leading-5', sunken)}>None Selected</div>
        <button aria-label="Selection lock" className="w-6 flex justify-center ml-[1px]">
          <svg viewBox="0 0 12 15" className="w-3 h-[15px]" fill="none" stroke="#aaa" aria-hidden="true">
            <path d="M.5 6.500h11v8H.5zM2.500 6V4q0-3 3.500-3t3.500 3v2M4 8v5M8 8v5" />
            <path d="M6 9v3" stroke="#eee" strokeWidth="2" />
          </svg>
        </button>
        <button aria-label="Absolute mode" className="w-[30px] flex justify-center">
          <svg viewBox="0 0 16 16" className="w-4 h-4" fill="none" stroke="#fff" aria-hidden="true">
            <path d="M.5.500h15v15H.5zM8 0v5M8 11v5M0 8h5M11 8h5" />
            <circle cx="8" cy="8" r="3.500" stroke="#ccc" />
          </svg>
        </button>
        <div className="flex gap-3">
          <Transform axis="X" />
          <Transform axis="Y" />
          <Transform axis="Z" />
        </div>
      </div>
      <div className="flex h-5 gap-1">
        <div className={clsx('flex-1 px-1 leading-5', sunken)}>Click or click-and-drag to select objects</div>
        <button aria-label="Isolate" className="w-[21px] h-5 -mr-3 bg-[#666] border border-black flex items-center justify-center">
          <svg viewBox="0 0 15 15" className="w-[15px] h-[15px]" fill="none" stroke="#fff" aria-hidden="true">
            <path d="M.500 4.500h10v10h-10zM4.500.500h10v10h-10zM.500 4.500l4-4M10.500 4.500l4-4M10.500 14.500l4-4M.500 14.500l4-4" />
          </svg>
        </button>
      </div>
    </div>
    <div className="w-[100px] ml-[14px] pt-[5px] flex flex-col gap-[5px]">
      <div className={clsx('h-5 px-[5px] leading-5', sunken)}>Grid = 10.0</div>
      <button className={clsx('h-5 px-[5px] leading-5 text-left', sunken)}>Add Time Tag</button>
    </div>
    <button aria-label="Set Keys" className={clsx('w-11 mt-1 ml-[3px] flex items-center justify-center', raised)}>
      <svg viewBox="0 0 24 11" className="w-6 h-[11px]" fill="none" stroke="#000" strokeWidth="2" aria-hidden="true">
        <circle cx="4.500" cy="5.500" r="3.500" />
        <path d="M8 5.500h16M18 6v4M22 6v4" />
      </svg>
    </button>
    <div className="w-12 ml-[3px] mt-1 flex flex-col gap-px">
      <button className={clsx('h-[22px]', raised)}>Auto</button>
      <button className={clsx('h-[22px]', raised)}>Set K.</button>
    </div>
    <div className="w-[116px] ml-1 mt-1 flex flex-col gap-[3px]">
      <Dropdown label="Key set" value="Selected" className="w-full h-5" />
      <div className="flex">
        <button aria-label="Key tangents" className="w-[26px] flex justify-center items-center">
          <Icon flyout className="w-4 h-4"><path d="M0 14l4 8C8 2 10 0 14 2s4 12 6 20M12 0h8" stroke="#aaa" strokeWidth="1.800" /></Icon>
        </button>
        <button className={clsx('flex-1 h-[21px]', raised)}>Filters...</button>
      </div>
    </div>
    <div className="w-[125px] ml-[3px] mt-1 flex flex-col gap-[1px]">
      <div className="flex h-[22px] items-center">
        {playback.map((p) => (
          <button key={p.name} aria-label={p.name} className="w-[25px] h-5 flex items-center justify-center border-r border-[#333]">
            <Icon flyout={p.flyout} className="w-[18px] h-[18px]"><path d={p.path} fill="#ddd" strokeWidth="1.500" /></Icon>
          </button>
        ))}
      </div>
      <div className="flex h-[22px] items-center">
        <button aria-label="Key Mode" className="shrink-0 w-[27px] flex justify-center">
          <Icon className="w-[18px] h-[18px]"><path d="M1 4v16M23 4v16M10 6v12l-7-6zM14 6v12l7-6z" fill="#bbb" /></Icon>
        </button>
        <input aria-label="Current Frame" defaultValue="0" className="shrink-0 w-[64px] h-[22px] pl-[3px] bg-[#565656] border-t-2 border-l-2 border-black border-r border-b border-r-[#333] border-b-[#333] outline-none" />
        <button aria-label="Frame spinner" className="shrink-0 w-3 h-[18px] ml-[1px] flex justify-center items-center border border-[#333]">
          <svg viewBox="0 0 6 12" className="w-[6px] h-3" fill="#ddd" aria-hidden="true"><path d="M0 4l3-3 3 3zM0 8l3 3 3-3z" /></svg>
        </button>
        <button aria-label="Time Configuration" className="shrink-0 ml-[4px] w-5 flex justify-center">
          <Icon className="w-[18px] h-[18px]">
            <path d="M1 1h16v20H1z" fill="#666" strokeWidth="1.800" />
            <path d="M4 4h7v6H4zM4 14h5v5H4zM14 4v8" fill="#aaa" />
            <circle cx="18" cy="17" r="5.500" fill="#555" strokeWidth="1.800" />
            <path d="M18 14v3h3" />
          </Icon>
        </button>
      </div>
    </div>
    <div className="w-[96px] ml-[2px] mt-1 flex flex-col gap-px">
      {[navTop, navBottom].map((row) => (
        <div key={row[0].name} className="h-[22px] flex items-center">
          {row.map((b) => (
            <button key={b.name} aria-label={b.name} className="w-6 flex justify-center">{b.icon}</button>
          ))}
        </div>
      ))}
    </div>
  </footer>
);

const App: React.FC = () => (
  <div className="h-screen flex flex-col overflow-hidden bg-[#444] font-['Open_Sans','Noto_Sans',sans-serif]">
    <TitleBar />
    <MainToolbar />
    <Ribbon />
    <main className="flex-1 min-h-0 flex">
      <div className="flex-1 min-w-0 flex flex-col">
        <Viewports />
        <TimeSlider />
        <TrackBar />
      </div>
      <CommandPanel />
    </main>
    <StatusBar />
  </div>
);

export default App;
